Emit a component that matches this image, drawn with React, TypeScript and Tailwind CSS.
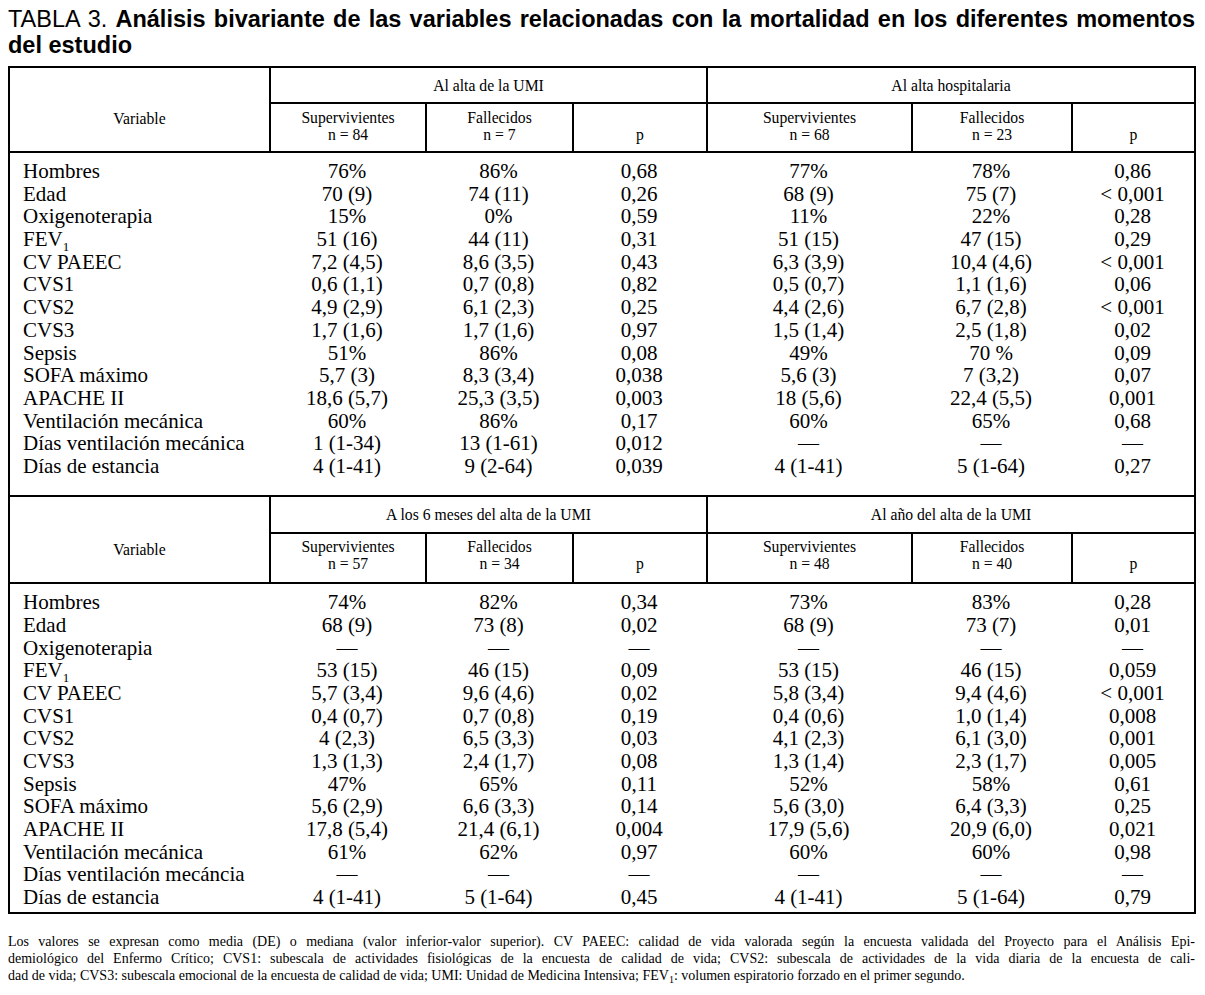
import React from "react";

const GRID = "grid grid-cols-[259px_156px_147px_134px_205px_160px_123px]";
const SERIF = { fontFamily: '"Liberation Serif", "Times New Roman", serif' };
const SANS = { fontFamily: '"Liberation Sans", Arial, sans-serif' };

type Row = [React.ReactNode, string, string, string, string, string, string];

const D = "—";

const Fev = () => (
  <span>
    FEV<span className="relative top-[5px] text-[13px] leading-none">1</span>
  </span>
);

const rows1: Row[] = [
  ["Hombres", "76%", "86%", "0,68", "77%", "78%", "0,86"],
  ["Edad", "70 (9)", "74 (11)", "0,26", "68 (9)", "75 (7)", "< 0,001"],
  ["Oxigenoterapia", "15%", "0%", "0,59", "11%", "22%", "0,28"],
  [<Fev key="f" />, "51 (16)", "44 (11)", "0,31", "51 (15)", "47 (15)", "0,29"],
  ["CV PAEEC", "7,2 (4,5)", "8,6 (3,5)", "0,43", "6,3 (3,9)", "10,4 (4,6)", "< 0,001"],
  ["CVS1", "0,6 (1,1)", "0,7 (0,8)", "0,82", "0,5 (0,7)", "1,1 (1,6)", "0,06"],
  ["CVS2", "4,9 (2,9)", "6,1 (2,3)", "0,25", "4,4 (2,6)", "6,7 (2,8)", "< 0,001"],
  ["CVS3", "1,7 (1,6)", "1,7 (1,6)", "0,97", "1,5 (1,4)", "2,5 (1,8)", "0,02"],
  ["Sepsis", "51%", "86%", "0,08", "49%", "70 %", "0,09"],
  ["SOFA máximo", "5,7 (3)", "8,3 (3,4)", "0,038", "5,6 (3)", "7 (3,2)", "0,07"],
  ["APACHE II", "18,6 (5,7)", "25,3 (3,5)", "0,003", "18 (5,6)", "22,4 (5,5)", "0,001"],
  ["Ventilación mecánica", "60%", "86%", "0,17", "60%", "65%", "0,68"],
  ["Días ventilación mecánica", "1 (1-34)", "13 (1-61)", "0,012", D, D, D],
  ["Días de estancia", "4 (1-41)", "9 (2-64)", "0,039", "4 (1-41)", "5 (1-64)", "0,27"],
];

const rows2: Row[] = [
  ["Hombres", "74%", "82%", "0,34", "73%", "83%", "0,28"],
  ["Edad", "68 (9)", "73 (8)", "0,02", "68 (9)", "73 (7)", "0,01"],
  ["Oxigenoterapia", D, D, D, D, D, D],
  [<Fev key="f" />, "53 (15)", "46 (15)", "0,09", "53 (15)", "46 (15)", "0,059"],
  ["CV PAEEC", "5,7 (3,4)", "9,6 (4,6)", "0,02", "5,8 (3,4)", "9,4 (4,6)", "< 0,001"],
  ["CVS1", "0,4 (0,7)", "0,7 (0,8)", "0,19", "0,4 (0,6)", "1,0 (1,4)", "0,008"],
  ["CVS2", "4 (2,3)", "6,5 (3,3)", "0,03", "4,1 (2,3)", "6,1 (3,0)", "0,001"],
  ["CVS3", "1,3 (1,3)", "2,4 (1,7)", "0,08", "1,3 (1,4)", "2,3 (1,7)", "0,005"],
  ["Sepsis", "47%", "65%", "0,11", "52%", "58%", "0,61"],
  ["SOFA máximo", "5,6 (2,9)", "6,6 (3,3)", "0,14", "5,6 (3,0)", "6,4 (3,3)", "0,25"],
  ["APACHE II", "17,8 (5,4)", "21,4 (6,1)", "0,004", "17,9 (5,6)", "20,9 (6,0)", "0,021"],
  ["Ventilación mecánica", "61%", "62%", "0,97", "60%", "60%", "0,98"],
  ["Días ventilación mecáncia", D, D, D, D, D, D],
  ["Días de estancia", "4 (1-41)", "5 (1-64)", "0,45", "4 (1-41)", "5 (1-64)", "0,79"],
];

function Header({
  left,
  right,
  n,
  rows,
}: {
  left: string;
  right: string;
  n: [string, string, string, string];
  rows: string;
}) {
  const sub = "border-l-2 border-t-2 border-black flex flex-col items-center pt-[4.5px]";
  return (
    <div className={`${GRID} ${rows} border-b-2 border-black text-[15.7px] leading-[17px]`}>
      <div className="row-span-2 flex flex-col justify-end items-center pb-[24px]">Variable</div>
      <div className="col-span-3 border-l-2 border-black flex items-center justify-center">{left}</div>
      <div className="col-span-3 border-l-2 border-black flex items-center justify-center">{right}</div>
      <div className={sub}>
        <span>Supervivientes</span>
        <span>{n[0]}</span>
      </div>
      <div className={sub}>
        <span>Fallecidos</span>
        <span>{n[1]}</span>
      </div>
      <div className={`${sub} pt-[21.5px]`}>p</div>
      <div className={sub}>
        <span>Supervivientes</span>
        <span>{n[2]}</span>
      </div>
      <div className={sub}>
        <span>Fallecidos</span>
        <span>{n[3]}</span>
      </div>
      <div className={`${sub} pt-[21.5px]`}>p</div>
    </div>
  );
}

function Body({ rows, pt, pb }: { rows: Row[]; pt: string; pb: string }) {
  return (
    <div className={`${pt} ${pb} text-[21px]`}>
      {rows.map((r, i) => (
        <div key={i} className={`${GRID} h-[22.7px] leading-[22.7px] whitespace-nowrap`}>
          <div className="pl-[13px]">{r[0]}</div>
          {r.slice(1).map((c, j) => (
            <div key={j} className="text-center">
              {c}
            </div>
          ))}
        </div>
      ))}
    </div>
  );
}

export default function App() {
  return (
    <div className="w-[1205px] h-[995px] bg-white text-black overflow-hidden">
      <div
        className="w-[1187px] ml-[8px] pt-[6px] text-[23.5px] leading-[26px] text-justify"
        style={SANS}
      >
        TABLA 3.{" "}
        <span className="font-bold">
          Análisis bivariante de las variables relacionadas con la mortalidad en los diferentes momentos del estudio
        </span>
      </div>

      <div className="w-[1188px] ml-[8px] mt-[8px] border-2 border-black" style={SERIF}>
        <Header
          left="Al alta de la UMI"
          right="Al alta hospitalaria"
          n={["n = 84", "n = 7", "n = 68", "n = 23"]}
          rows="grid-rows-[34px_49px]"
        />
        <Body rows={rows1} pt="pt-[7px]" pb="pb-[17px]" />
        <div className="border-t-2 border-black">
          <Header
            left="A los 6 meses del alta de la UMI"
            right="Al año del alta de la UMI"
            n={["n = 57", "n = 34", "n = 48", "n = 40"]}
            rows="grid-rows-[35px_50px]"
          />
        </div>
        <Body rows={rows2} pt="pt-[7.5px]" pb="pb-[3px]" />
      </div>

      <div className="w-[1187px] ml-[8px] mt-[19px] text-[14px] leading-[17px]" style={SERIF}>
        <div className="text-justify [text-align-last:justify]">
          Los valores se expresan como media (DE) o mediana (valor inferior-valor superior). CV PAEEC: calidad de vida
          valorada según la encuesta validada del Proyecto para el Análisis Epi-
        </div>
        <div className="text-justify [text-align-last:justify]">
          demiológico del Enfermo Crítico; CVS1: subescala de actividades fisiológicas de la encuesta de calidad de vida;
          CVS2: subescala de actividades de la vida diaria de la encuesta de cali-
        </div>
        <div className="whitespace-nowrap">
          dad de vida; CVS3: subescala emocional de la encuesta de calidad de vida; UMI: Unidad de Medicina Intensiva; FEV
          <span className="relative top-[3px] text-[10px] leading-none">1</span>: volumen espiratorio forzado en el primer
          segundo.
        </div>
      </div>
    </div>
  );
}
